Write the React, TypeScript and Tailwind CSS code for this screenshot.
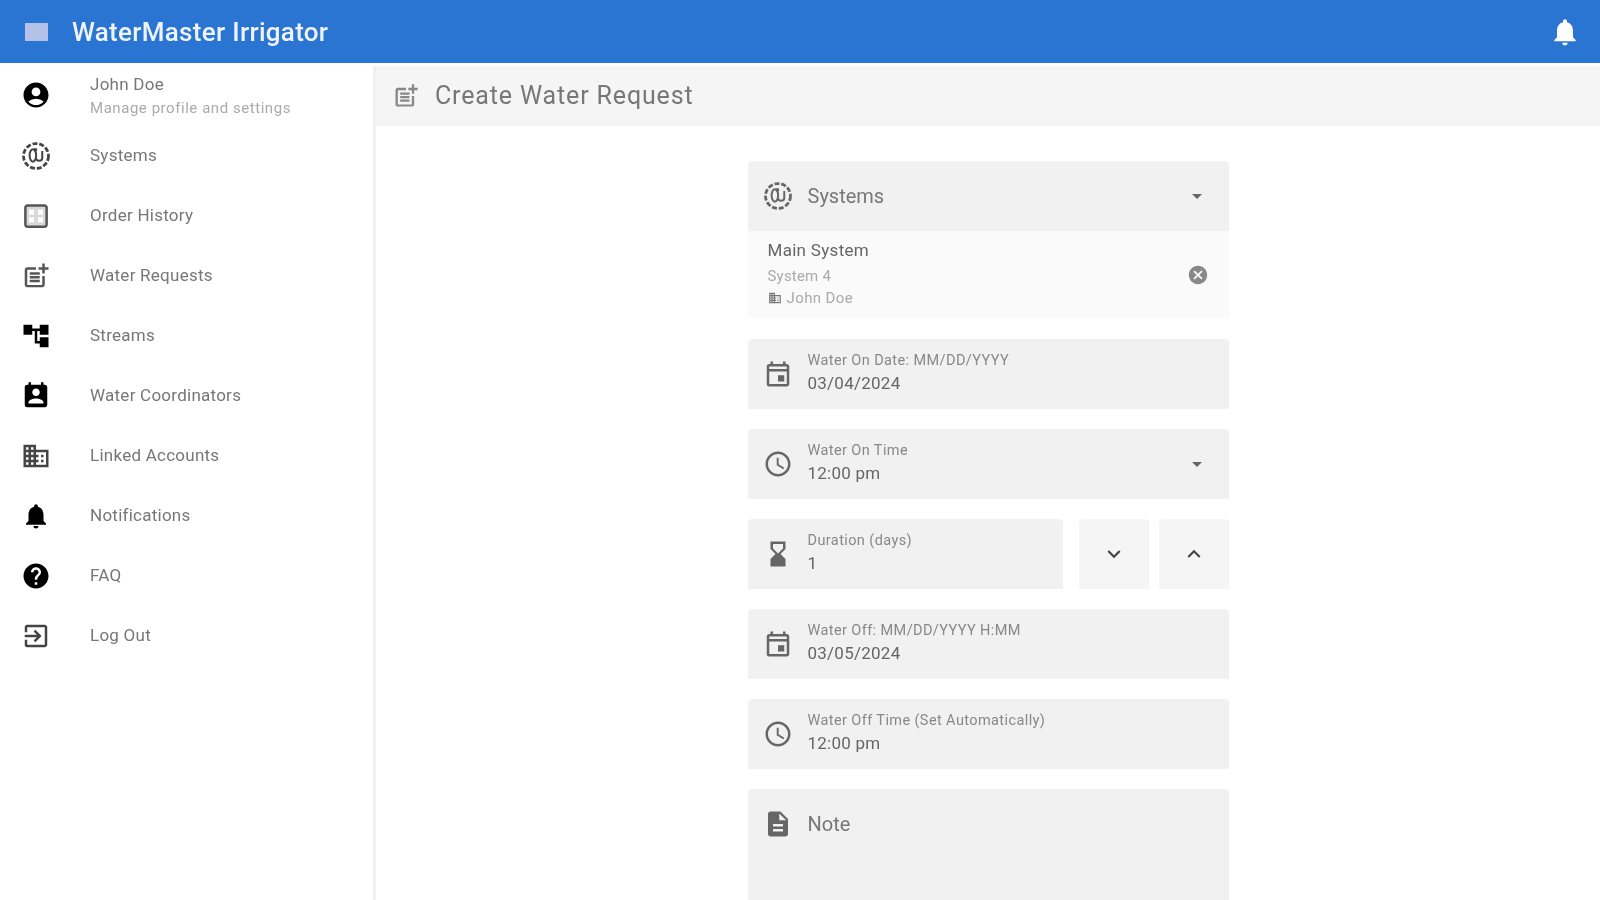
import React from 'react';
import {
  MdAccountCircle, MdOutlinePostAdd, MdAccountTree, MdPermContactCalendar,
  MdOutlineBusiness, MdNotifications, MdHelp, MdOutlineExitToApp, MdOutlineEvent, MdOutlineAccessTime,
  MdHourglassBottom, MdDescription, MdExpandMore, MdExpandLess, MdArrowDropDown, MdCancel, MdBusiness,
} from 'react-icons/md';

const SystemsIcon: React.FC<{ className?: string }> = ({ className }) => (
  <svg viewBox="0 0 24 24" fill="none" stroke="currentColor" className={className}>
    <circle cx="12" cy="12" r="10" strokeWidth="2.2" strokeDasharray="4 1.5" />
    <ellipse cx="9.5" cy="11.5" rx="2.6" ry="5" strokeWidth="1.6" />
    <path d="M12 13.5c0 3 5 3 5 0V8" strokeWidth="1.6" />
    <circle cx="11.5" cy="7" r="1.5" fill="currentColor" stroke="none" />
  </svg>
);

const OrderHistoryIcon: React.FC<{ className?: string }> = ({ className }) => (
  <svg viewBox="0 0 24 24" className={className}>
    <rect x="3.5" y="3.5" width="17" height="17" rx="2" fill="#d9d9d9" stroke="#555" strokeWidth="2" />
    <rect x="6.5" y="7" width="4" height="4" fill="#fff" />
    <rect x="13.5" y="7" width="4" height="4" fill="#fff" />
    <rect x="6.5" y="13" width="4" height="4" fill="#fff" />
    <rect x="13.5" y="13" width="4" height="4" fill="#fff" />
  </svg>
);

const navItems = [
  { label: 'Systems', icon: SystemsIcon, color: 'text-[#444]' },
  { label: 'Order History', icon: OrderHistoryIcon, color: 'text-[#444]' },
  { label: 'Water Requests', icon: MdOutlinePostAdd, color: 'text-[#555]' },
  { label: 'Streams', icon: MdAccountTree, color: 'text-black' },
  { label: 'Water Coordinators', icon: MdPermContactCalendar, color: 'text-black' },
  { label: 'Linked Accounts', icon: MdOutlineBusiness, color: 'text-[#444]' },
  { label: 'Notifications', icon: MdNotifications, color: 'text-black' },
  { label: 'FAQ', icon: MdHelp, color: 'text-black' },
  { label: 'Log Out', icon: MdOutlineExitToApp, color: 'text-[#444]' },
];

const Field: React.FC<{
  icon: React.ComponentType<{ className?: string }>;
  label: string;
  value: string;
  caret?: boolean;
  className?: string;
}> = ({ icon: Icon, label, value, caret, className }) => (
  <div className={`h-[70px] bg-[#f1f1f1] rounded-t flex items-center pl-[15px] pr-[20px] ${className ?? ''}`}>
    <Icon className="w-[30px] h-[30px] text-[#666] shrink-0" />
    <div className="ml-[15px] flex-1 min-w-0 pb-[2px]">
      <div className="text-[14.5px] leading-[16px] text-[#888] tracking-[0.4px]">{label}</div>
      <div className="text-[17px] leading-[20px] mt-[4px] text-[#666] tracking-[0.25px]">{value}</div>
    </div>
    {caret && <MdArrowDropDown className="w-[24px] h-[24px] text-[#666]" />}
  </div>
);

export default function App() {
  return (
    <div className="w-[1600px] h-[900px] overflow-hidden bg-white flex flex-col blur-[0.6px]" style={{ fontFamily: 'Roboto, sans-serif' }}>
      <header className="h-[63px] shrink-0 bg-[#2a74d2] flex items-center pl-[25px] pr-[19px]">
        <div className="w-[23px] h-[18px] bg-[#b4c2ea]" />
        <div className="ml-[24px] pt-[1px] text-[26px] font-medium text-[#eef3fb] tracking-[0.3px]">WaterMaster Irrigator</div>
        <MdNotifications className="ml-auto w-[32px] h-[32px] text-white" />
      </header>

      <div className="flex flex-1 min-h-0">
        <aside className="w-[373px] shrink-0 text-[#666]">
          <div className="h-[63px] flex items-center pl-[21px]">
            <MdAccountCircle className="w-[30px] h-[30px] text-black shrink-0" />
            <div className="ml-[39px]">
              <div className="text-[17px] leading-[20px] text-[#777] tracking-[0.25px]">John Doe</div>
              <div className="text-[15px] leading-[16px] mt-[6px] text-[#aaa] tracking-[0.55px]">Manage profile and settings</div>
            </div>
          </div>
          {navItems.map(({ label, icon: Icon, color }) => (
            <div key={label} className="h-[60px] flex items-center pl-[21px]">
              <Icon className={`w-[30px] h-[30px] shrink-0 ${color}`} />
              <div className="ml-[39px] text-[17px] text-[#777] tracking-[0.25px]">{label}</div>
            </div>
          ))}
        </aside>

        <main className="flex-1 min-w-0 mt-[3px] border-l-[3px] border-[#f0f0f0]">
          <div className="h-[60px] bg-[#f5f5f5] flex items-center pl-[16px]">
            <MdOutlinePostAdd className="w-[28px] h-[28px] text-[#888]" />
            <div className="ml-[15px] text-[25px] text-[#777] tracking-[0.85px]">Create Water Request</div>
          </div>

          <div className="w-[481px] mx-auto mt-[35px] flex flex-col gap-[20px]">
            <div className="mb-[1px]">
              <div className="h-[70px] bg-[#f1f1f1] rounded-t flex items-center pl-[15px] pr-[20px]">
                <SystemsIcon className="w-[30px] h-[30px] text-[#666]" />
                <div className="ml-[15px] flex-1 text-[20px] text-[#777]">Systems</div>
                <MdArrowDropDown className="w-[24px] h-[24px] text-[#666]" />
              </div>
              <div className="h-[87px] bg-[#fafafa] flex items-center pl-[20px] pr-[20px]">
                <div className="flex-1 pb-[4px]">
                  <div className="text-[17px] leading-[20px] text-[#666] tracking-[0.3px]">Main System</div>
                  <div className="text-[15px] leading-[16px] mt-[8px] text-[#aaa] tracking-[0.2px]">System 4</div>
                  <div className="text-[15px] leading-[16px] mt-[6px] text-[#aaa] flex items-center tracking-[0.4px]">
                    <MdBusiness className="w-[14px] h-[14px] text-[#777] mr-[5px]" />John Doe
                  </div>
                </div>
                <MdCancel className="w-[22px] h-[22px] text-[#888]" />
              </div>
            </div>
            <Field icon={MdOutlineEvent} label="Water On Date: MM/DD/YYYY" value="03/04/2024" />
            <Field icon={MdOutlineAccessTime} label="Water On Time" value="12:00 pm" caret />
            <div className="flex">
              <Field icon={MdHourglassBottom} label="Duration (days)" value="1" className="w-[315px]" />
              <button className="ml-[16px] w-[70px] h-[70px] bg-[#f5f5f5] rounded-t flex items-center justify-center">
                <MdExpandMore className="w-[26px] h-[26px] text-[#444]" />
              </button>
              <button className="ml-[10px] w-[70px] h-[70px] bg-[#f5f5f5] rounded-t flex items-center justify-center">
                <MdExpandLess className="w-[26px] h-[26px] text-[#444]" />
              </button>
            </div>
            <Field icon={MdOutlineEvent} label="Water Off: MM/DD/YYYY H:MM" value="03/05/2024" />
            <Field icon={MdOutlineAccessTime} label="Water Off Time (Set Automatically)" value="12:00 pm" />
            <div className="h-[140px] bg-[#f1f1f1] rounded-t flex pl-[15px] pt-[20px]">
              <MdDescription className="w-[30px] h-[30px] text-[#666]" />
              <div className="ml-[15px] text-[20px] leading-[30px] text-[#777]">Note</div>
            </div>
          </div>
        </main>
      </div>
    </div>
  );
}
